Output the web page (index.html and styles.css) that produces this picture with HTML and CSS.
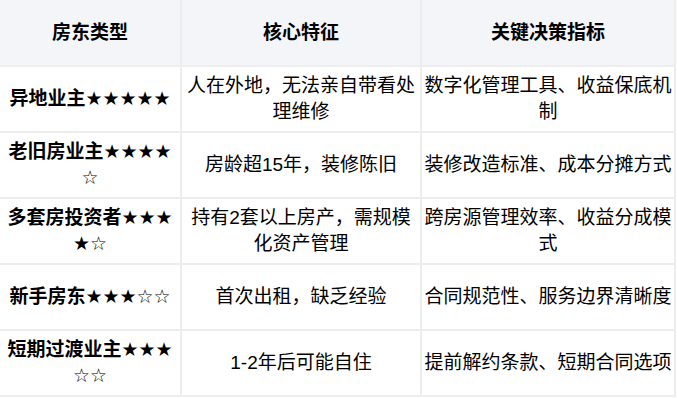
FILE: index.html
```html
<!DOCTYPE html>
<html lang="zh-CN">
<head>
    <meta charset="UTF-8">
    <meta name="viewport" content="width=device-width, initial-scale=1.0">
    <title>房东类型</title>
    <link rel="stylesheet" href="styles.css">
</head>
<body>
    <table class="owner-table">
        <colgroup>
            <col class="col-type">
            <col class="col-trait">
            <col class="col-metric">
        </colgroup>
        <thead>
            <tr>
                <th>房东类型</th>
                <th>核心特征</th>
                <th>关键决策指标</th>
            </tr>
        </thead>
        <tbody>
            <tr>
                <td class="type">异地业主★★★★★</td>
                <td>人在外地，无法亲自带看处理维修</td>
                <td>数字化管理工具、收益保底机制</td>
            </tr>
            <tr>
                <td class="type">老旧房业主★★★★☆</td>
                <td>房龄超15年，装修陈旧</td>
                <td>装修改造标准、成本分摊方式</td>
            </tr>
            <tr>
                <td class="type">多套房投资者★★★★☆</td>
                <td>持有2套以上房产，需规模化资产管理</td>
                <td>跨房源管理效率、收益分成模式</td>
            </tr>
            <tr>
                <td class="type">新手房东★★★☆☆</td>
                <td>首次出租，缺乏经验</td>
                <td>合同规范性、服务边界清晰度</td>
            </tr>
            <tr>
                <td class="type">短期过渡业主★★★☆☆</td>
                <td>1-2年后可能自住</td>
                <td>提前解约条款、短期合同选项</td>
            </tr>
        </tbody>
    </table>
</body>
</html>
```

FILE: styles.css
```css
body {
    margin: 0;
    background-color: white;
    color: #000;
    font-family: "Liberation Sans", "DejaVu Sans", "Noto Sans CJK SC", sans-serif;
    font-size: 19px;
    line-height: 26px;
}
.owner-table {
    border-collapse: separate;
    border-spacing: 0;
    table-layout: fixed;
    width: 676px;
}
.col-type { width: 182px; }
.col-trait { width: 240px; }
.col-metric { width: 254px; }
th, td {
    padding: 6px 2px;
    text-align: center;
    vertical-align: middle;
    border-right: 2px solid #ededed;
    border-bottom: 2px solid #ededed;
    height: 52px;
}
th {
    background-color: #f4f5f9;
    font-weight: bold;
    height: 53px;
}
.type {
    font-weight: bold;
    word-break: break-all;
}
```
